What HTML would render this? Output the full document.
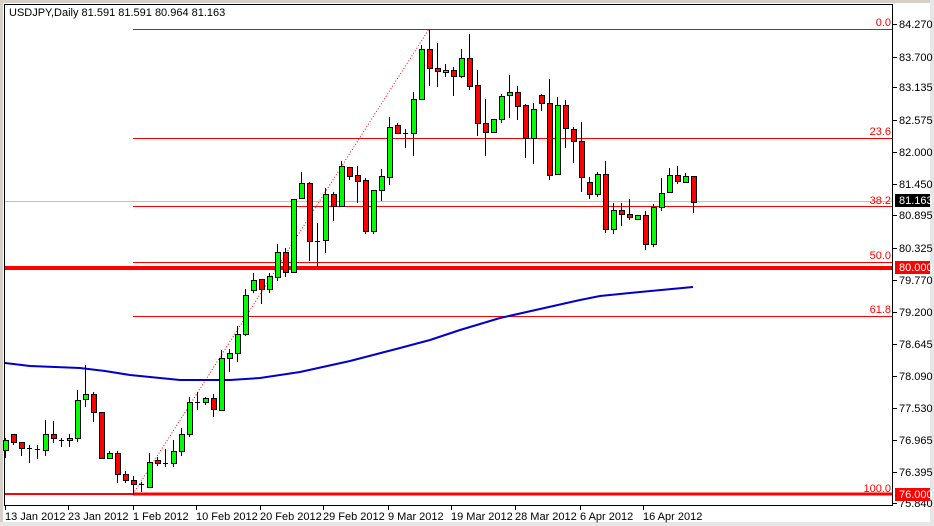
<!DOCTYPE html>
<html><head><meta charset="utf-8"><style>
html,body{margin:0;padding:0;background:#fff}
svg{display:block}
text{font-family:"Liberation Sans",sans-serif;font-size:11px}
</style></head><body>
<svg width="934" height="526" viewBox="0 0 934 526" xmlns="http://www.w3.org/2000/svg">
<rect width="934" height="526" fill="#fff"/>
<rect x="0" y="0" width="934" height="3" fill="#d4d0c8"/>
<rect x="0" y="0" width="3" height="526" fill="#d4d0c8"/>
<rect x="930" y="0" width="4" height="526" fill="#e6e6e6"/>
<rect x="0" y="522" width="934" height="4" fill="#e6e6e6"/>
<g shape-rendering="crispEdges">
<line x1="4" y1="4.5" x2="893" y2="4.5" stroke="#000"/>
<line x1="4.5" y1="4" x2="4.5" y2="506" stroke="#000"/>
<line x1="892.5" y1="4" x2="892.5" y2="506" stroke="#000"/>
<line x1="4" y1="505.5" x2="893" y2="505.5" stroke="#000"/>
<!-- fib lines -->
<line x1="133" y1="29.5" x2="892" y2="29.5" stroke="#f00"/>
<line x1="133" y1="138.5" x2="892" y2="138.5" stroke="#f00"/>
<line x1="5" y1="201.5" x2="892" y2="201.5" stroke="#c0c0c0"/>
<line x1="133" y1="206.5" x2="892" y2="206.5" stroke="#f00"/>
<line x1="133" y1="262.5" x2="892" y2="262.5" stroke="#f00"/>
<rect x="5" y="266" width="887" height="4" fill="#f00"/>
<line x1="133" y1="316.5" x2="892" y2="316.5" stroke="#f00"/>
<rect x="5" y="493" width="887" height="2" fill="#f00"/>
<line x1="133" y1="494" x2="892" y2="494" stroke="#f00" stroke-width="3"/>
</g>
<line x1="133" y1="494" x2="429" y2="29" stroke="#f00" stroke-dasharray="1,2"/>
<polyline fill="none" stroke="#0000cc" stroke-width="2" points="5,363 30,366 80,368 105,371 130,375 180,380 230,380 260,378 300,372 350,361 400,348 430,340 460,330 500,318 540,309 580,300 600,296 640,292 693,287"/>
<g fill="#f00" text-anchor="end" font-size="10">
<text x="891" y="26">0.0</text>
<text x="891" y="135">23.6</text>
<text x="891" y="204">38.2</text>
<text x="891" y="259">50.0</text>
<text x="891" y="313">61.8</text>
<text x="891" y="492">100.0</text>
</g>
<g id="c" shape-rendering="crispEdges" stroke="#000">
<script>/* static */</script>
</g>
<g shape-rendering="crispEdges" stroke="#000" stroke-width="1">
<path d="M5.5 438V458M13.5 434V445M21.5 442V456M29.5 445V463M37.5 445V459M45.5 420V456M53.5 421V443M61.5 438V447M69.5 434V447M77.5 390V442M85.5 365V407M93.5 392V422M101.5 412V459M109.5 451V458M117.5 451V483M125.5 471V483M133.5 476V495M141.5 482V492M149.5 453V488M157.5 457V466M165.5 449V467M173.5 440V467M181.5 428V456M189.5 397V437M197.5 392V410M205.5 397V405M213.5 394V417M221.5 350V410M229.5 349V372M237.5 326V362M245.5 289V336M253.5 273V293M261.5 279V304M269.5 273V293M277.5 244V281M285.5 248V277M293.5 199V272M301.5 172V198M309.5 182V261M317.5 223V267M325.5 188V253M333.5 192V221M341.5 161V206M349.5 167V180M357.5 166V203M365.5 178V234M373.5 190V234M381.5 169V201M389.5 117V185M397.5 123V133M405.5 129V148M413.5 92V156M421.5 45V99M429.5 30V86M437.5 43V87M445.5 64V77M453.5 67V96M461.5 49V78M469.5 34V90M477.5 70V136M485.5 99V156M493.5 119V132M501.5 94V123M509.5 75V118M517.5 86V120M525.5 104V158M533.5 103V164M541.5 94V111M549.5 79V180M557.5 97V174M565.5 100V148M573.5 127V163M581.5 122V192M589.5 177V199M597.5 172V197M605.5 161V233M613.5 203V234M621.5 203V226M629.5 199V220M637.5 215V220M645.5 211V250M653.5 204V247M661.5 178V211M669.5 168V193M677.5 166V184M685.5 173V183M693.5 176V213"/>
<path d="M27 448.5H32M35 449.5H40M59 440.5H64M139 484.5H144M163 463.5H168M195 402.5H200M315 241.5H320M403 133.5H408" />
</g>
<g shape-rendering="crispEdges" stroke="#000" fill="#00ff00">
<rect x="3.5" y="440.5" width="5" height="10"/><rect x="43.5" y="434.5" width="5" height="16"/><rect x="67.5" y="438.5" width="5" height="2"/><rect x="75.5" y="400.5" width="5" height="38"/><rect x="83.5" y="394.5" width="5" height="5"/><rect x="107.5" y="453.5" width="5" height="5"/><rect x="147.5" y="462.5" width="5" height="25"/><rect x="171.5" y="451.5" width="5" height="12"/><rect x="179.5" y="434.5" width="5" height="17"/><rect x="187.5" y="402.5" width="5" height="32"/><rect x="203.5" y="398.5" width="5" height="4"/><rect x="219.5" y="358.5" width="5" height="52"/><rect x="227.5" y="353.5" width="5" height="5"/><rect x="235.5" y="334.5" width="5" height="19"/><rect x="243.5" y="295.5" width="5" height="39"/><rect x="251.5" y="280.5" width="5" height="10"/><rect x="267.5" y="276.5" width="5" height="13"/><rect x="275.5" y="252.5" width="5" height="25"/><rect x="291.5" y="199.5" width="5" height="73"/><rect x="299.5" y="183.5" width="5" height="15"/><rect x="323.5" y="194.5" width="5" height="46"/><rect x="339.5" y="166.5" width="5" height="40"/><rect x="371.5" y="190.5" width="5" height="41"/><rect x="379.5" y="176.5" width="5" height="14"/><rect x="387.5" y="127.5" width="5" height="50"/><rect x="411.5" y="99.5" width="5" height="34"/><rect x="419.5" y="49.5" width="5" height="50"/><rect x="443.5" y="70.5" width="5" height="2"/><rect x="459.5" y="58.5" width="5" height="18"/><rect x="491.5" y="119.5" width="5" height="13"/><rect x="499.5" y="96.5" width="5" height="23"/><rect x="507.5" y="92.5" width="5" height="3"/><rect x="531.5" y="109.5" width="5" height="29"/><rect x="555.5" y="105.5" width="5" height="69"/><rect x="595.5" y="174.5" width="5" height="20"/><rect x="611.5" y="210.5" width="5" height="19"/><rect x="635.5" y="215.5" width="5" height="4"/><rect x="651.5" y="207.5" width="5" height="37"/><rect x="659.5" y="193.5" width="5" height="14"/><rect x="667.5" y="175.5" width="5" height="17"/><rect x="683.5" y="176.5" width="5" height="6"/>
</g>
<g shape-rendering="crispEdges" stroke="#000" fill="#ff0000">
<rect x="11.5" y="434.5" width="5" height="8"/><rect x="19.5" y="442.5" width="5" height="6"/><rect x="51.5" y="434.5" width="5" height="4"/><rect x="91.5" y="394.5" width="5" height="18"/><rect x="99.5" y="412.5" width="5" height="46"/><rect x="115.5" y="453.5" width="5" height="21"/><rect x="123.5" y="474.5" width="5" height="6"/><rect x="131.5" y="480.5" width="5" height="4"/><rect x="155.5" y="460.5" width="5" height="3"/><rect x="211.5" y="398.5" width="5" height="11"/><rect x="259.5" y="279.5" width="5" height="10"/><rect x="283.5" y="252.5" width="5" height="20"/><rect x="307.5" y="183.5" width="5" height="58"/><rect x="331.5" y="194.5" width="5" height="12"/><rect x="347.5" y="167.5" width="5" height="9"/><rect x="355.5" y="175.5" width="5" height="6"/><rect x="363.5" y="180.5" width="5" height="51"/><rect x="395.5" y="125.5" width="5" height="8"/><rect x="427.5" y="49.5" width="5" height="19"/><rect x="435.5" y="68.5" width="5" height="3"/><rect x="451.5" y="70.5" width="5" height="6"/><rect x="467.5" y="58.5" width="5" height="28"/><rect x="475.5" y="85.5" width="5" height="38"/><rect x="483.5" y="123.5" width="5" height="9"/><rect x="515.5" y="92.5" width="5" height="14"/><rect x="523.5" y="105.5" width="5" height="33"/><rect x="539.5" y="95.5" width="5" height="8"/><rect x="547.5" y="103.5" width="5" height="72"/><rect x="563.5" y="105.5" width="5" height="23"/><rect x="571.5" y="129.5" width="5" height="12"/><rect x="579.5" y="141.5" width="5" height="36"/><rect x="587.5" y="182.5" width="5" height="12"/><rect x="603.5" y="174.5" width="5" height="55"/><rect x="619.5" y="210.5" width="5" height="4"/><rect x="627.5" y="214.5" width="5" height="3"/><rect x="643.5" y="215.5" width="5" height="29"/><rect x="675.5" y="175.5" width="5" height="6"/><rect x="691.5" y="176.5" width="5" height="26"/>
</g>
<!-- right axis -->
<g shape-rendering="crispEdges" stroke="#000">
<path d="M893 24.5H897M893 57.5H897M893 87.5H897M893 120.5H897M893 152.5H897M893 184.5H897M893 215.5H897M893 248.5H897M893 280.5H897M893 312.5H897M893 344.5H897M893 376.5H897M893 408.5H897M893 440.5H897M893 472.5H897M893 503.5H897"/>
<path d="M5.5 506V510M68.5 506V510M133.5 506V510M196.5 506V510M260.5 506V510M323.5 506V510M388.5 506V510M451.5 506V510M515.5 506V510M580.5 506V510M643.5 506V510"/>
</g>
<g fill="#000">
<text x="899" y="28">84.270</text>
<text x="899" y="61">83.700</text>
<text x="899" y="91">83.135</text>
<text x="899" y="124">82.575</text>
<text x="899" y="156">82.000</text>
<text x="899" y="188">81.450</text>
<text x="899" y="219">80.895</text>
<text x="899" y="252">80.325</text>
<text x="899" y="284">79.770</text>
<text x="899" y="316">79.200</text>
<text x="899" y="348">78.645</text>
<text x="899" y="380">78.090</text>
<text x="899" y="412">77.530</text>
<text x="899" y="444">76.965</text>
<text x="899" y="476">76.395</text>
<text x="899" y="507">75.840</text>
</g>
<rect x="895" y="194" width="35" height="13" fill="#000"/>
<text x="899" y="204" fill="#fff">81.163</text>
<rect x="895" y="261" width="35" height="13" fill="#f00"/>
<text x="899" y="271" fill="#fff">80.000</text>
<rect x="895" y="488" width="35" height="13" fill="#f00"/>
<text x="899" y="498" fill="#fff">76.000</text>
<g fill="#000">
<text x="5" y="520">13 Jan 2012</text>
<text x="68" y="520">23 Jan 2012</text>
<text x="133" y="520">1 Feb 2012</text>
<text x="196" y="520">10 Feb 2012</text>
<text x="260" y="520">20 Feb 2012</text>
<text x="323" y="520">29 Feb 2012</text>
<text x="388" y="520">9 Mar 2012</text>
<text x="451" y="520">19 Mar 2012</text>
<text x="515" y="520">28 Mar 2012</text>
<text x="580" y="520">6 Apr 2012</text>
<text x="643" y="520">16 Apr 2012</text>
</g>
<text x="9" y="16" fill="#000">USDJPY,Daily  81.591 81.591 80.964 81.163</text>
</svg>
</body></html>
